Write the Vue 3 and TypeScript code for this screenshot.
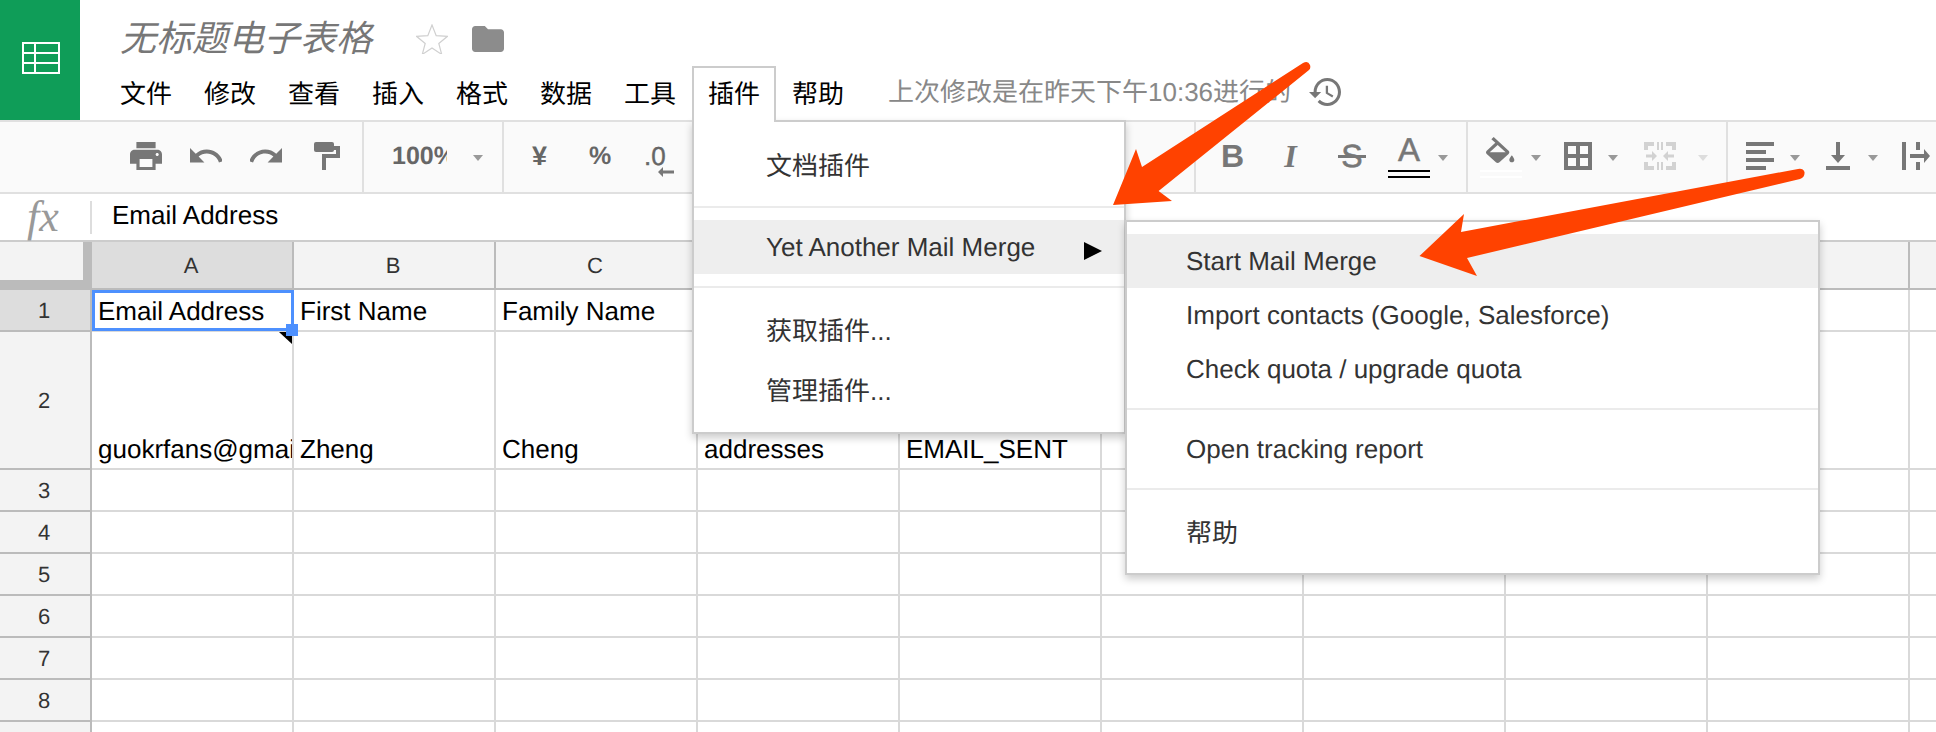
<template>
  <div class="page">
    <header class="head">
      <div class="logo">
        <svg width="38" height="32" viewBox="0 0 38 32" fill="none" stroke="#fff" stroke-width="2">
          <rect x="1" y="1" width="36" height="30" />
          <path d="M13 1v30M1 11h36M1 21h36" />
        </svg>
      </div>
      <div class="head-main">
        <div class="title-row">
          <span class="doc-title">无标题电子表格</span>
          <svg class="star" width="32" height="30" viewBox="0 0 32 30">
            <path d="M16 1l4.2 10.6 11.3.7-8.7 7.2 2.9 10.9L16 24l-9.7 6.4 2.9-10.9-8.7-7.2 11.3-.7z" fill="none" stroke="#d0d0d0" stroke-width="1.2" />
          </svg>
          <svg class="folder" width="32" height="26" viewBox="2 4 20 16" preserveAspectRatio="none">
            <path d="M10 4H4c-1.1 0-2 .9-2 2v12c0 1.1.9 2 2 2h16c1.1 0 2-.9 2-2V8c0-1.1-.9-2-2-2h-8l-2-2z" fill="#8c8c8c" />
          </svg>
        </div>
        <nav class="menubar">
          <span v-for="m in menus" :key="m" class="menu-item" :class="{ active: m === '插件' }">{{ m }}</span>
          <span class="status">上次修改是在昨天下午10:36进行的</span>
          <svg class="history" width="32" height="28" viewBox="1 3 21 18" preserveAspectRatio="none">
            <path d="M13 3c-4.97 0-9 4.03-9 9H1l3.89 3.89.07.14L9 12H6c0-3.87 3.13-7 7-7s7 3.13 7 7-3.13 7-7 7c-1.93 0-3.68-.79-4.94-2.06l-1.42 1.42C8.27 19.99 10.51 21 13 21c4.97 0 9-4.03 9-9s-4.03-9-9-9zm-1 5v5l4.28 2.54.72-1.21-3.5-2.08V8H12z" fill="#777" />
          </svg>
        </nav>
      </div>
    </header>

    <div class="toolbar">
      <div class="group g1">
        <svg class="i-print" width="32" height="28" viewBox="2 3 20 18" preserveAspectRatio="none">
          <path d="M19 8H5c-1.66 0-3 1.34-3 3v6h4v4h12v-4h4v-6c0-1.66-1.34-3-3-3zm-3 11H8v-5h8v5zm3-7c-.55 0-1-.45-1-1s.45-1 1-1 1 .45 1 1-.45 1-1 1zm-1-9H6v4h12V3z" />
        </svg>
        <svg class="i-undo" width="32" height="28" viewBox="0 0 32 28">
          <path transform="translate(-3.2 -5.2) scale(1.6)" d="M12.5 8c-2.65 0-5.05.99-6.9 2.6L2 7v9h9l-3.62-3.62c1.39-1.16 3.16-1.88 5.12-1.88 3.54 0 6.55 2.31 7.6 5.5l2.37-.78C21.08 11.03 17.15 8 12.5 8z" />
        </svg>
        <svg class="i-redo" width="32" height="28" viewBox="0 0 32 28">
          <path transform="translate(-3.2 -5.2) scale(1.6)" d="M18.4 10.6C16.55 8.99 14.15 8 11.5 8c-4.65 0-8.58 3.03-9.96 7.22L3.9 16c1.05-3.19 4.05-5.5 7.6-5.5 1.95 0 3.73.72 5.12 1.88L13 16h9V7l-3.6 3.6z" />
        </svg>
        <svg class="i-roller" width="26" height="28" viewBox="0 0 26 28">
          <rect x="0" y="0" width="20" height="10" rx="2" />
          <path d="M20 4h6v12H12v12H8V12h14V8h-2z" />
        </svg>
      </div>

      <div class="group g2">
        <span class="zoom-val">100%</span>
        <i class="caret c-zoom"></i>
      </div>

      <div class="group g3">
        <span class="tb-text t-yen">¥</span>
        <span class="tb-text t-pct">%</span>
        <span class="tb-text t-dec">.0
          <svg class="dec-arrow" width="16" height="10" viewBox="0 0 16 10"><path d="M5 0v3.500h11v3H5V10L0 5z" /></svg>
        </span>
      </div>

      <div class="group g4">
        <span class="fmt f-b">B</span>
        <span class="fmt f-i">I</span>
        <span class="fmt f-s">S</span>
        <span class="fmt f-a">
          A
          <span class="double-line"></span>
        </span>
        <i class="caret c-a"></i>
      </div>

      <div class="group g5">
        <span class="bucket">
          <svg width="30" height="26" viewBox="3 0 18 17" preserveAspectRatio="none">
            <path d="M16.56 8.94L7.62 0 6.21 1.41l2.380 2.380-5.150 5.150c-.59.59-.59 1.540 0 2.120l5.500 5.500c.29.29.68.44 1.060.44s.77-.15 1.060-.44l5.500-5.500c.59-.58.59-1.530 0-2.120zM5.21 10L10 5.210 14.790 10H5.210zM18.500 12s-1.500 1.900-1.500 3c0 .9.7 1.500 1.500 1.500s1.500-.6 1.500-1.500c0-1.100-1.500-3-1.500-3z" />
          </svg>
          <span class="double-line pale"></span>
        </span>
        <i class="caret c-fill"></i>
        <svg class="i-borders" width="28" height="28" viewBox="0 0 28 28">
          <path fill-rule="evenodd" d="M0 0h28v28H0zM4 4v8h8V4zM16 4v8h8V4zM4 16v8h8v-8zM16 16v8h8v-8z" />
        </svg>
        <i class="caret c-border"></i>
        <svg class="i-merge" width="32" height="28" viewBox="0 0 32 28">
          <path d="M0 0h10v4H4v4H0zM22 0h10v8h-4V4h-6zM0 20h4v4h6v4H0zM28 20h4v8H22v-4h6zM13 0h2v8h-2zM17 0h2v8h-2zM13 20h2v8h-2zM17 20h2v8h-2z" />
          <path d="M2 12.500h6V9l5 5-5 5v-3.500H2zM30 12.500h-6V9l-5 5 5 5v-3.500h6z" />
        </svg>
        <i class="caret c-merge pale-caret"></i>
      </div>

      <div class="group g6">
        <svg class="i-align" width="28" height="28" viewBox="0 0 28 28">
          <path d="M0 0h28v4H0zM0 8h20v4H0zM0 16h28v4H0zM0 24h20v4H0z" />
        </svg>
        <i class="caret c-align"></i>
        <svg class="i-valign" width="24" height="28" viewBox="0 0 24 28">
          <path d="M10 0h4v13h5l-7 8-7-8h5zM0 24h24v4H0z" />
        </svg>
        <i class="caret c-valign"></i>
        <svg class="i-wrap" width="28" height="28" viewBox="0 0 28 28">
          <path d="M0 0h4v28H0zM14 0h4v8h-4zM14 20h4v8h-4zM8 12h14V7l6 7-6 7v-5H8z" />
        </svg>
      </div>
    </div>

    <div class="formula">
      <span class="fx">fx</span>
      <span class="fx-sep"></span>
      <span class="fx-value">Email Address</span>
    </div>

    <div class="sheet">
      <div class="sheet-row col-row">
        <div class="corner"></div>
        <div v-for="c in columns" :key="c" class="col-head" :class="{ picked: c === 'A' }">{{ c }}</div>
      </div>
      <div v-for="r in rows" :key="r.n" class="sheet-row" :class="{ tall: r.n === 2 }">
        <div class="row-head" :class="{ picked: r.n === 1 }">{{ r.n }}</div>
        <div v-for="(c, i) in columns" :key="c" class="cell">
          <span class="cell-text">{{ r.cells[i] }}</span>
          <template v-if="i === 0 && r.n === 1">
            <span class="selection"></span>
            <span class="sel-handle"></span>
          </template>
          <span v-if="i === 0 && r.n === 2" class="note-mark"></span>
        </div>
      </div>
    </div>

    <div class="dropdown addons">
      <div class="dd-item cjk">文档插件</div>
      <div class="dd-sep first"></div>
      <div class="dd-item hover has-sub">
        <span>Yet Another Mail Merge</span>
        <i class="sub-arrow"></i>
      </div>
      <div class="dd-sep"></div>
      <div class="dd-item cjk">获取插件...</div>
      <div class="dd-item cjk">管理插件...</div>
    </div>

    <div class="dropdown submenu">
      <div class="dd-item hover">Start Mail Merge</div>
      <div class="dd-item">Import contacts (Google, Salesforce)</div>
      <div class="dd-item">Check quota / upgrade quota</div>
      <div class="dd-sep"></div>
      <div class="dd-item">Open tracking report</div>
      <div class="dd-sep"></div>
      <div class="dd-item cjk">帮助</div>
    </div>

    <svg class="arrows" width="1936" height="732" viewBox="0 0 1936 732">
      <path d="M1303 63Q1308 60 1310 65Q1311 68 1309 70L1158.600 191L1172 201L1113 205L1136 149L1142 167Z" />
      <path d="M1798 169Q1803 168 1804.500 172Q1805 177 1800 179L1467 258L1477 276L1419.500 256L1464 214L1461 232Z" />
    </svg>
  </div>
</template>

<script setup lang="ts">
interface SheetRow {
  n: number
  cells: string[]
}

const menus: string[] = ['文件', '修改', '查看', '插入', '格式', '数据', '工具', '插件', '帮助']
const columns: string[] = ['A', 'B', 'C', 'D', 'E', 'F', 'G', 'H', 'I', 'J']

const rows: SheetRow[] = [
  { n: 1, cells: ['Email Address', 'First Name', 'Family Name'] },
  { n: 2, cells: ['guokrfans@gmail.com', 'Zheng', 'Cheng', 'addresses', 'EMAIL_SENT'] },
  { n: 3, cells: [] },
  { n: 4, cells: [] },
  { n: 5, cells: [] },
  { n: 6, cells: [] },
  { n: 7, cells: [] },
  { n: 8, cells: [] },
  { n: 9, cells: [] }
]
</script>

<style>
html,
body {
  margin: 0;
  overflow: hidden;
  background: #fff;
}
</style>

<style scoped>
.page {
  position: relative;
  width: 1936px;
  height: 732px;
  overflow: hidden;
  font-family: "Liberation Sans", "Noto Sans CJK SC", sans-serif;
  font-size: 26px;
  color: #000;
  background: #fff;
  text-rendering: geometricPrecision;
}

/* header */
.head {
  display: flex;
  height: 120px;
  border-bottom: 2px solid #e0e0e0;
}
.logo {
  width: 80px;
  height: 120px;
  flex: none;
  background: #0f9d58;
  display: flex;
  align-items: center;
  justify-content: center;
  padding: 0 0 4px 2px;
  box-sizing: border-box;
}
.head-main {
  flex: 1;
  min-width: 0;
}
.title-row {
  display: flex;
  align-items: center;
  height: 54px;
  padding: 12px 0 0 40px;
}
.doc-title {
  font-size: 36px;
  font-style: italic;
  color: #777;
  line-height: 56px;
}
.star {
  margin-left: 44px;
}
.folder {
  margin-left: 24px;
}
.menubar {
  display: flex;
  align-items: flex-start;
  padding-left: 24px;
}
.menu-item {
  position: relative;
  z-index: 6;
  width: 84px;
  height: 56px;
  box-sizing: border-box;
  padding: 0 14px;
  border: 2px solid transparent;
  border-bottom: 0;
  line-height: 52px;
  white-space: nowrap;
}
.menu-item.active {
  border-color: #ccc;
  background: #fff;
}
.status {
  margin-left: 28px;
  color: #888;
  line-height: 52px;
  white-space: nowrap;
}
.history {
  margin: 12px 0 0 18px;
}

/* toolbar */
.toolbar {
  display: flex;
  height: 70px;
  background: #fafafa;
  border-bottom: 2px solid #e0e0e0;
  overflow: hidden;
}
.group {
  display: flex;
  align-items: flex-start;
  flex: none;
  box-sizing: border-box;
  padding-top: 20px;
  border-right: 2px solid #e0e0e0;
}
.group svg {
  fill: #777;
  flex: none;
}
.g1 { width: 364px; }
.g2 { width: 140px; }
.g3 { width: 692px; }
.g4 { width: 272px; }
.g5 { width: 260px; }
.g6 { flex: 1; border-right: 0; }

.i-print { margin-left: 130px; }
.i-undo, .i-redo { margin-left: 28px; }
.i-roller { margin-left: 32px; }

.zoom-val {
  width: 55px;
  margin-left: 28px;
  overflow: hidden;
  font-size: 25px;
  font-weight: 700;
  line-height: 28px;
  color: #666;
  white-space: nowrap;
}
.caret {
  flex: none;
  width: 0;
  height: 0;
  margin-top: 13px;
  border-top: 6px solid #999;
  border-left: 5px solid transparent;
  border-right: 5px solid transparent;
}
.pale-caret { border-top-color: #ddd; }
.c-zoom { margin-left: 26px; }

.tb-text {
  position: relative;
  font-size: 25px;
  font-weight: 700;
  line-height: 28px;
  color: #666;
  white-space: nowrap;
}
.t-yen { margin-left: 28px; width: 16px; font-size: 27px; }
.t-pct { margin-left: 41px; width: 22px; }
.t-dec { margin-left: 33px; font-weight: 400; font-size: 26px; -webkit-text-stroke: 0.4px #666; }
.dec-arrow {
  position: absolute;
  left: 14px;
  top: 25px;
}

.fmt {
  position: relative;
  color: #777;
  font-size: 32px;
  line-height: 28px;
  text-align: center;
}
.f-b { margin-left: 25px; width: 21px; font-weight: 700; }
.f-i {
  margin-left: 38px;
  width: 21px;
  font-family: "Liberation Serif", serif;
  font-style: italic;
  font-weight: 700;
}
.f-s {
  margin-left: 37px;
  width: 28px;
  -webkit-text-stroke: 0.6px #777;
}
.f-s::after {
  content: "";
  position: absolute;
  left: 0;
  right: 0;
  top: 13px;
  height: 3px;
  background: #777;
}
.f-a {
  margin-left: 22px;
  width: 42px;
  height: 28px;
  font-size: 33px;
  margin-top: -6px;
  -webkit-text-stroke: 0.5px #777;
}
.double-line {
  position: absolute;
  left: 0;
  right: 0;
  top: 34px;
  height: 4px;
  border-top: 2px solid #000;
  border-bottom: 2px solid #000;
}
.double-line.pale {
  top: 33px;
  border-color: #fff;
}
.c-a { margin-left: 8px; }

.bucket {
  position: relative;
  width: 42px;
  height: 28px;
  margin: -5px 0 0 12px;
  display: flex;
  justify-content: center;
}
.c-fill { margin-left: 9px; }
.i-borders { margin-left: 23px; }
.c-border { margin-left: 16px; }
.group .i-merge { margin-left: 26px; fill: #d2d2d2; }
.c-merge { margin-left: 22px; }

.i-align { margin-left: 18px; }
.c-align { margin-left: 16px; }
.i-valign { margin-left: 26px; }
.c-valign { margin-left: 18px; }
.i-wrap { margin-left: 24px; }

/* formula bar */
.formula {
  display: flex;
  align-items: center;
  height: 46px;
  border-bottom: 2px solid #ccc;
}
.fx {
  width: 90px;
  box-sizing: border-box;
  padding-left: 27px;
  font-family: "Liberation Serif", serif;
  font-style: italic;
  font-size: 44px;
  line-height: 46px;
  color: #999;
}
.fx-sep {
  width: 2px;
  height: 33px;
  background: #ddd;
}
.fx-value {
  margin-left: 20px;
  line-height: 44px;
  margin-bottom: 4px;
}

/* grid */
.sheet-row {
  display: grid;
  grid-template-columns: 92px repeat(10, 202px);
  height: 42px;
}
.sheet-row.tall {
  height: 138px;
}
.sheet-row.col-row {
  height: 48px;
}
.corner {
  box-sizing: border-box;
  background: #f3f3f3;
  border-right: 9px solid #bbb;
  border-bottom: 10px solid #bbb;
}
.col-head,
.row-head {
  display: flex;
  align-items: center;
  justify-content: center;
  box-sizing: border-box;
  padding: 2px 2px 0 0;
  background: #f3f3f3;
  border-right: 2px solid #bbb;
  border-bottom: 2px solid #bbb;
  font-size: 22px;
  color: #333;
}
.picked {
  background: #ddd;
}
.cell {
  position: relative;
  display: flex;
  align-items: flex-end;
  box-sizing: border-box;
  min-width: 0;
  padding-left: 6px;
  border-right: 2px solid #d9d9d9;
  border-bottom: 2px solid #d9d9d9;
}
.cell-text {
  overflow: hidden;
  white-space: nowrap;
  line-height: 38px;
}
.selection {
  position: absolute;
  left: 0;
  top: 0;
  right: -2px;
  bottom: -1px;
  border: 3px solid #4d90fe;
  z-index: 2;
}
.sel-handle {
  position: absolute;
  right: -6px;
  bottom: -6px;
  width: 12px;
  height: 12px;
  background: #4d90fe;
  z-index: 3;
}
.note-mark {
  position: absolute;
  top: 0;
  right: 0;
  width: 0;
  height: 0;
  border-top: 12px solid #000;
  border-left: 13px solid transparent;
  z-index: 1;
}

/* dropdown menus */
.dropdown {
  position: absolute;
  z-index: 5;
  box-sizing: border-box;
  background: #fff;
  border: 2px solid #ccc;
  box-shadow: 0 4px 8px rgba(0, 0, 0, 0.2);
  color: #333;
}
.addons {
  left: 692px;
  top: 120px;
  width: 434px;
  height: 314px;
  padding-top: 13px;
}
.addons .dd-item {
  padding-left: 72px;
}
.submenu {
  left: 1125px;
  top: 220px;
  width: 695px;
  height: 355px;
  padding-top: 12px;
}
.submenu .dd-item {
  padding-left: 59px;
}
.dd-item {
  height: 54px;
  line-height: 54px;
  white-space: nowrap;
}
.dd-item.cjk {
  height: 60px;
  line-height: 62px;
}
.dd-item.hover {
  background: #eee;
}
.has-sub {
  display: flex;
  justify-content: space-between;
  padding-right: 22px;
}
.sub-arrow {
  width: 0;
  height: 0;
  margin-top: 22px;
  border-left: 18px solid #000;
  border-top: 9px solid transparent;
  border-bottom: 9px solid transparent;
}
.dd-sep {
  height: 2px;
  margin: 12px 0;
  background: #ebebeb;
}
.dd-sep.first {
  margin-top: 11px;
}

.arrows {
  position: absolute;
  left: 0;
  top: 0;
  z-index: 10;
  pointer-events: none;
  fill: #ff4200;
}
</style>
